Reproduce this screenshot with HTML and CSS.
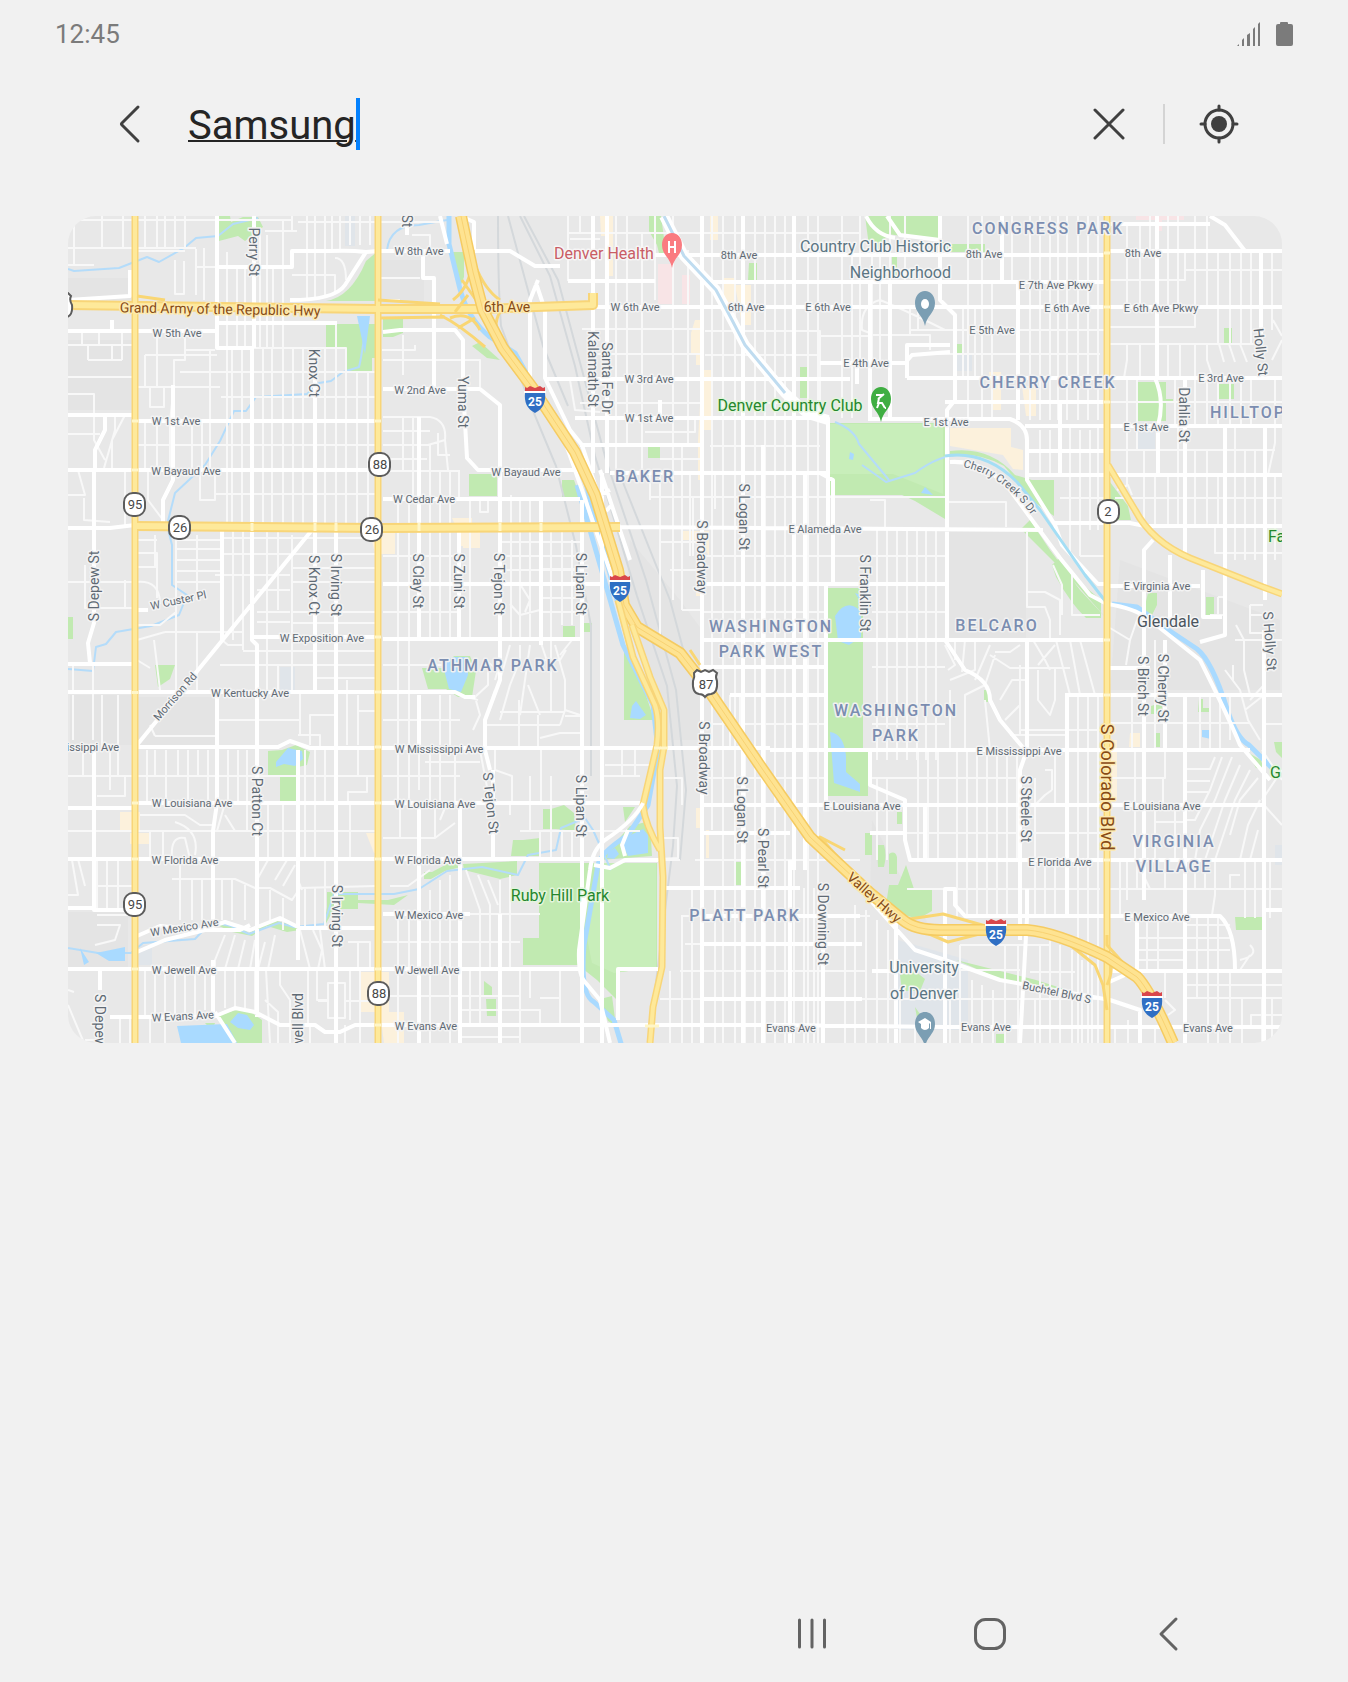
FILE: index.html
```html
<!DOCTYPE html>
<html lang="en">
<head>
<meta charset="utf-8">
<meta name="viewport" content="width=device-width, initial-scale=1">
<title>Map search</title>
<link rel="stylesheet" href="styles.css">
</head>
<body>
<div class="screen">
  <div class="status">
    <time class="clock">12:45</time>
    <svg class="status-icons" width="56" height="24" viewBox="0 0 56 24" aria-hidden="true">
      <path d="M0 24l2-2v2zM5 24v-6l2-2v8zM10 24V13l3-2v13zM16 24V7l2-2v19zM21 24V2l2-2v24zM43 2v-1q0-1 1-1h6q1 0 1 1v1h3q2 0 2 2v18q0 2-2 2H41q-2 0-2-2V4q0-2 2-2z"/>
    </svg>
  </div>
  <form class="search" role="search">
    <button class="icon-btn back" type="button" aria-label="Back">
      <svg width="24" height="40" viewBox="0 0 24 40"><path d="M20 3L4 19q-1 1 0 2l16 16"/></svg>
    </button>
    <div class="field">
      <input class="query" type="text" value="Samsung" aria-label="Search places">
      <span class="caret"></span>
    </div>
    <button class="icon-btn clear" type="button" aria-label="Clear">
      <svg width="32" height="32" viewBox="0 0 32 32"><path d="M2 2l28 28M30 2L2 30"/></svg>
    </button>
    <span class="divider"></span>
    <button class="icon-btn locate" type="button" aria-label="My location">
      <svg width="40" height="40" viewBox="0 0 40 40"><circle cx="20" cy="20" r="14"/><path d="M20 2v4M20 34v4M2 20h4M34 20h4"/><circle class="dot" cx="20" cy="20" r="8"/></svg>
    </button>
  </form>
  <main class="map">
<svg viewBox="68 216 1214 827" role="img" aria-label="Map of Denver">
<defs>
  <symbol id="interstate" viewBox="0 0 22 28"><path fill="#d9474b" d="M1 2l2 1 3-2 5 2 5-2 3 2 2-1v5H1z"/><path fill="#fff" d="M0 6h22v2H0z"/><path fill="#2f6fc4" d="M1 8h20c1 9-2 16-10 20C3 24 0 17 1 8z"/><text class="shield-num light" x="11" y="21">25</text></symbol>
  <symbol id="pin" viewBox="0 0 20 36"><path d="M10 0C4 0 0 5 0 12c0 10 8 12 10 23 2-11 10-13 10-23C20 5 16 0 10 0z"/></symbol>
  <path id="creek-label" d="M963 467Q1006 476 1034 519"/>
</defs>
<path class="land" d="M68 216h1214v827H68z"/>
<path class="block" d="M68 278h65v22H68zM68 340h66v70H68zM380 260h44v45h-44zM946 532h80v107h-80zM630 540l50 60 22 30v110h-36l-12-60-30-60zM872 820l33 65 30 50-65-40zM70 695h64v50H70zM138 697h78v48h-78zM68 912h60v55H68zM1120 560l160 60v70h-170z"/>
<path class="civic" d="M345 216h10v30h-10zM280 667h15v25h-15zM957 355h15v16h-15zM1137 431h18v18h-18zM898 940l70 20v70h-70zM1275 845h7v20h-7zM137 945h15v20h-15z"/>
<path class="medical" d="M658 264h15v40h-15zM682 275h8v29h-8zM1136 216h48v4h-22v11h-6v-11h-20z"/>
<path class="shop" d="M950 428h61v19l12 3v20l-10-1-10-14-53-9zM695 320h8v45h-7v-12h-5v-20zM702 370h9v60h-10v50h-3v-40zM600 216h5v20h-4zM608 216h5v60h-4zM710 216h8v24h-8zM722 278h12v30h-12zM735 285h16v40h-9zM989 372h12v38h-8zM1022 386h14v30h-10zM452 518h20v28h-12v-10zM462 524h18v24h-17zM370 532h25v22h-20zM683 531h26v25l-10-16h-16zM696 556h7v40h-7zM120 812h20v18h-20zM130 833h20v11h-20zM366 833h14v20h-6zM361 972h28v40h-28zM380 1012h24v31h-20zM1130 733h10v14h-11zM1106 740h11v60h-14zM696 808h4v20h-4zM706 830h3v28h-3z"/>
<path class="green" d="M218 216h12l1 6 12-5h15l5 10-18 14-7-5-19 5zM378 251v50h-52q25-4 40-40zM326 324h52v34h-6v13h-26v-24h-20zM383 318h20v15l-10 4h-10zM452 252h12v25l-5 13zM480 342l20 18-13-2-15-12zM649 216h12l5 37-7 0-2-8-8-14zM749 263h8v17h-9zM865 216h16v30h-12zM870 216h72v28h43v8h-38v-10l-60-8-8 20zM892 257h5v22h-5zM957 344h7v10h-7zM800 367h7v31h-7zM1137 382h29v39h-29zM1166 399h7v4h-7zM1217 384h17v15h-17zM1224 328h8v15h-8zM648 447h12v11h-12zM469 474h28v22h-28zM562 480h12l6 17h-18zM827 423h118v96l-30-18-13-6h-75v-25zM950 451q40-5 65 24l17 5h22v36l-20-14-30-36q-24-14-54-11zM1030 520l20 30 30 40 26 28-30-34-55-55zM1059 558l18 22 24 20v18h-15q-15-14-30-41l-4-12zM1110 482l18 24 3 14h-16l-5-10zM1148 593h9v12l-6 12-8-3zM1206 597h8v20h-8zM1154 705h8v9h-11v-8zM1154 733h6v14h-6zM1199 699h4v9h6v4h-11zM827 588h36v162h5v46h-41zM563 626h12v12h-12zM584 623h8v9h-8zM624 650q15 20 30 70h-30zM422 668h22l10-12 16 0 6 15-4 26h-14l-12-8h-18zM68 617h5v22h-5zM155 665h20l-5 14-12 8zM268 751l14-1 14-5 14 7-3 13-9 2v34h-18v-26h-12zM543 809h8l13-4 10 8 2 18-20-2h-13zM513 840h10l17-2v18h-29zM463 864l54-3v14l-17 4-36-9zM424 872h8l15-8 14-3v6l-16 4-14 8h-7zM539 863h118v105l-38 4v30l-22-22-19-15h-55v-27h16zM612 996l4 30-8-5-8-22zM600 860l30-34 20-5 2 35zM623 807h12l-10 15zM734 862h7v23h-7zM865 833h7v22h-7zM877 845h7q3 10 0 22h-6zM889 854q6-4 8 3v17h-8zM889 885h9l8-20 8 24h18v22l-14 8-20-6-12-8zM897 812h5v12h-5zM327 892h31v17h-24l-10 18 3-20zM215 924h18l16 9 20-10 8-2 30 8-20 3-20-6-15 10-20-4zM358 900h30l20-5-14 10-36-2zM217 1015l28-7 17 12v23h-30zM205 1023h10l-3 8zM484 981l8 6v9h-8zM486 999h10v17h-9zM900 975l15-4 10 8-5 12-18 0zM915 1007l5 7-3 4zM996 1034h10v9h-10zM956 960l80 20 44 14-80-15zM1235 917h28v13h-27zM1247 752l14 8 3 10-8-2zM1274 742h8v16l-6-6zM984 690h4v12h-4z"/>
<path class="green light" d="M598 863h58v104l-42 6-22-10-6-30zM827 424h116v70l-50-20h-66z"/>
<path class="rail" d="M498 216q0 70 3 110l30 80 25 60 20 80 15 80v150M520 216l30 60 25 90 20 90 42 140 30 90 10 100-4 60-20 160M524 216l34 64 24 90 24 90 40 120 30 110 10 100-6 70M508 216l35 130 25 60M622 480l48 120 16 60"/>
<path class="stream" d="M68 269l6 2 45-3 28-11 12 5 25-14 12-10 22-2 15-12 25-6M387 250q3-25 32-25l28-5M366 325q-5 35-7 42l-16 5-12 9-12 2-12 11-51 3-10 14h-12l-14 30-15 24-30 28-8 32 5 20v40l15 10-8 20-28 11-35 6-10 12-10 3-3 24-25-2M68 948l30 5 33 0 12-10 52-4 16-17 20 4 18 8 30-11 15 4 30-3 10-30 60 0 25-5 28-18 35-4 36 8 10-20 28-5 5-22 24-10 8 12 18 40M835 422q20 8 24 22l30 36M862 465l24 17 29-9q24-18 45-18"/>
<path class="river" d="M449 216v28l11 45q8 30 30 48l25 16 28 50 38 60 15 60 22 80 12 45M577 485l26 90 20 70 30 60 5 45-10 55-20 30q-28 18-30 30l-14 80q-4 50 10 57l20 18 12 40M1112 604l25 3 30 22 30 20q15 12 30 60 10 30 22 36l25 25"/>
<path class="water" d="M357 316h13l-5 38zM442 662l12-5h14v18l-7 17-12-3zM276 762l12-14 14 3 1 8-8 7-11-2-8 3zM632 706l4-5 10 14-6 4-10-1zM624 838l19-9 5 6v18l-20 3-4-8zM608 852l7-4 4 6-5 5-7-1zM177 1026l50-2 10 19h-56zM230 1022l8-9 9 2 7 10-4 5-12-2zM96 953l29-6v14h-16zM80 948l9 14-5 3zM835 616q10-16 22-8l4 5v24l-12 8-11-4zM830 732q14 2 16 24v16l14 12v8l-14-5-12-4zM855 593l6 2v7zM921 493l4-6 8 8zM850 452l4 2-1 6-4-1zM1202 730l7 0 2 9-9-2z"/>

<path class="minor" d="M68 220H292M68 248H196M137 251H185M102 216V248M123 216V248M145 216V248M157 216V248M165 216V248M175 216V248M185 216V248M74 216V265M94 265H68M196 249V295M204 248V300M175 260V294H184V261M195 267H217M227 252V348M237 268V348M245 268V348M260 235V348M267 235V348M273 268V348M283 220V348M265 231H297M292 216V232M298 222H378M307 216V300M315 216V300M325 216V298M332 216V251M340 216V251M350 216V245M360 216V245M370 216V245M292 275H335V292M335 258Q346 258 346 280
M227 348V525M232 348V525M242 348V525M263 348V525M272 348V525M283 348V525M293 348V525M303 348V525M325 348V525M336 324V525M346 348V525M357 372V525M368 372V525M254 348H346V372M180 372H375M137 387H220M221 397H375M137 445H375M68 345H132M88 360H122M88 345V360M82 330V345M99 330V345M112 345V360M122 330V360M68 377H132M68 394H94V412M68 434H100M94 412V440L105 460M115 415V430L104 468M125 415L112 440V470M145 355V387M157 330V387M164 387V407H150V387M185 330V360H174V386L170 421V470M192 421V470M202 421V470M210 350V470M145 355H217M185 350H215M145 421V470M157 421V470M148 470V500L163 520M78 470L85 495H68M84 498V520L110 522M200 470V500H215V470M215 494H375M125 470V528
M68 582H135M85 565V608H135M125 580V608M73 664V692M93 664V740M102 695V747M118 695V747M73 695V740M155 535V568M176 535V690M197 535V600M233 530V640M243 530V650M267 530V692M278 530V610M292 535V692M347 680V745M358 695V745M176 540H222M176 549H222M176 560H222M176 571H222M176 582H222M137 540H157M137 553H157V598M137 567H157M222 538H378M222 554H290M292 568H375M215 575H290M257 590H290M257 612H290M292 612H375M292 623H375M165 632H243M137 625H160L176 612M137 640L165 632M154 640L160 690M243 651H375M220 665H375M315 678H375M137 582Q160 580 160 604M137 660L150 668M217 720H300M155 736H217M155 736L150 725M310 745V715H335M298 735H320V747M267 665V692M278 665V692M197 632V690M222 640L228 645H243M292 582H375M292 554H375M257 622H290M300 692V735M358 711H375
M68 776H378M97 796H125V776M83 750V776M110 750V790M118 750V776M147 750V803M155 750V776M166 750V803M178 750V776M188 750V803M198 750V776M208 750V803M228 750V803M238 750V803M247 750V831M268 803V859M283 803V859M305 750V859M315 750V859M325 750V803M350 803V859M348 803V792H367V776M358 750V776M68 831H378M140 815H185L200 825H215M175 822Q200 830 195 855M172 859Q170 835 185 838L190 859M150 831V859M163 831V859M225 803L217 831M225 815L235 831M97 859V910M107 859V910M118 859V910M97 886H132M68 895H78L72 860M78 859L85 886M97 915H132M97 925H120L115 940L95 945M172 879H235L255 888H270L292 900L300 888L375 886M180 859V920M192 879V920M202 879V920M222 879V920M232 879V920M245 885V920M258 890V920M270 890V920M283 898V930M305 888V930M315 888V930M325 860V930M258 878L268 860M275 880L287 860M283 886L295 865M302 890L298 880
M225 935L215 960V969M235 935L225 969M245 940L238 969M255 940L250 969M265 942L258 969M275 935L268 969M300 930L310 969M320 930L325 969M313 930L322 950L318 969M145 970V1017M155 970V1017M165 970V1017M175 970V1017M185 970V1017M195 970V1017M205 970V1010M225 970V1008M235 970V1008M245 970V1008M255 970V1012M266 970L270 1043M280 970V985L290 1000V1043M308 970V1025M317 970V1000H328V983H345V1018H328V1000M318 1001H328M345 1001H375M350 970V1020M360 970V1025M68 990L74 992M68 1005L84 1043M85 1040H100M137 1043V1017M120 1017V1043M130 1017V1043M150 1017V1043M165 1017V1043M265 1000L278 1012V1043M310 1043V1025M345 1025V1043M360 1043V1025M348 942H370V969M358 942V969
M380 222H440M412 235H430V251M380 278H420M378 300H400M383 360H440M403 335V375M382 350H415V345M383 417H430Q447 420 445 440L428 445H383M445 440L448 470M383 431H430M438 433V455L450 455M383 459H427M403 417V470M413 417V499M430 445V499M440 470V525M450 470V525M459 471V499M383 471H460M440 360H480V387M398 500V640M409 500V640M430 499V640M440 530V640M450 530V640M470 500V640M480 497V512H488V497M511 495V640M520 499V640M530 499V640M551 530V640M562 530V625M572 540V625M383 556H460M383 612H460M383 665H445M383 720H460M500 556H580M500 570H580M500 542H580M541 612H580M541 569H580M541 598H580M520 584L530 600L525 612M510 604L520 615L540 610M398 640V745M409 640V745M440 695V745M450 695V745M475 697L480 715L473 730M475 697L488 685V668M485 660L498 670L495 680M495 690L485 720M510 645L500 680M520 645V660L510 685L500 720M530 645L525 680L520 715M528 685L540 715M540 640L550 670M555 645L565 680V710L560 725M572 640L560 655M540 660H560L566 650M500 712H565M485 725H560M540 738L560 733H580M565 710L580 715M461 695L478 700M519 700V747M538 715V747M551 640V712
M383 776H460M398 750V803M409 750V803M419 750V790M430 750V803M440 750V803M455 750V803M383 838H435L455 823M400 803V838M419 803V838M435 803V838M447 803L440 820M425 762H480M480 750L490 803M495 750V770L512 776V803M530 776V831M541 750V803M551 776V831M520 831H640M510 803V815M540 831V859M551 831V859M562 831V859M572 831V859M600 776H640M605 765H650M622 750V776M635 750V776M565 716H582M466 870L480 910V969M478 875L490 905V969M488 880L498 905M500 880V969M510 875V969M470 914H540M383 942H520M383 996H520M390 886L408 886L430 870M430 890V969M440 880V969M450 875V969M420 872V859M398 914V969M409 914V969M398 969V1043M430 969V1043M450 969V1043M470 969V1025M480 969V1025M520 969V1043M540 998H560V969M560 998V1025M460 1010H540V1025M500 969V996M530 969V998M460 1037H520
M568 216V281M568 233H860M570 239H600M580 216V233M593 239V216M616 216V470M627 216V445M642 233V445M655 216V300M673 216V600M688 250V445M712 216V830M723 216V1043M735 216V1043M755 216V1043M765 216V1043M775 216V1043M785 216V1043M808 216V1043M818 216V1043M842 216V418M852 250V418M860 216V360M872 250V360M582 329H700M705 331H820V418M820 336H870M590 354H700M705 355H820M580 403H700M720 403H820M600 412L575 410L570 380M645 432H695V418M710 446H820M660 459H700M620 445H600M642 445V470M650 497H700M650 500V473M660 473V640M682 445V610M690 556V473M693 497V556M703 497H945M715 509V473M661 542H700M670 570H700M703 556H945M682 610H702M703 612H826M703 667H826M740 695V750M703 724H826M730 695V750M703 778H826M700 805H770M703 833H790M695 860H860M680 860H640M640 860L678 858V838H660M682 805V778H664M682 916H870M685 944H700M680 971H866M682 915V1043M692 888V1043M715 888V1043M745 750V1043M794 870V1043M804 888V1043M814 888V1043M845 916V1043M855 905V1043M866 910V1043M877 920V1043M888 930V1043M660 999H945M670 971V1043
M880 300Q860 305 862 330L875 335M880 300Q905 310 945 330M910 335L930 335V350M910 330H945M908 345V378M870 335H910V307M918 307V330M905 216V282M890 216V363M880 250V363M968 216V420M982 216V420M992 280V420M1012 216V280M1030 216V420M1040 216V420M1050 216V420M1058 216V420M1067 216V420M1078 216V420M1088 216V420M1098 216V420M940 330H1105M925 354H1100M975 307V378M963 307V378M1140 224V307M1127 224V310M1150 216V251M1168 216V310M1178 216V307M1195 216V307M1207 216V307M1218 251V344M1230 251V344M1241 251V344M1251 251V344M1272 251V330M1185 270H1282M1107 280H1185V251M1107 327H1195V309M1107 344H1260M1127 344V360L1124 378M1140 344V378M1168 344V378M1180 344V378M1195 344V378M1207 344V360L1213 378M1219 344L1224 362M1229 344L1235 362M1240 344L1247 362M1107 402H1282M1107 450H1275M1127 378V451M1137 378V451M1175 378V426M1195 378V426M1207 378V426M1218 378V426M1230 378V426M1241 378V426M1251 378V426M1275 378V443L1268 475M1282 340L1272 360M1273 320L1282 336M1040 430V475M1050 430V475M1070 426V530M1080 430V530M1090 430V530M1098 426V530M1127 451V485M1144 451V526M1155 475V526M1168 475V526M1178 426V526M1195 451V526M1207 451V526M1218 475V526M1235 426V560M1245 451V560M1255 451V560M1275 475V560M1060 498H1105M1115 498H1282M1215 526V553H1282M1080 556H1105M1117 490L1128 485L1132 495
M877 529V760M887 529V760M897 529V760M907 529V760M917 529V760M926 529V760M936 529V760M872 556H945M872 612H945M872 667H945M872 724H945M949 502H1006V527M870 500H885V529M1080 530V556M1070 530V556M1028 592H1045L1060 600V635M1027 532V607H1045L1050 620V640M1072 575V615H1100M1053 565L1062 585V615M945 645L955 665L948 670M955 640V660M965 640L962 672M975 640V670L950 680M990 645L975 680M995 652H1010L1020 645M990 655L1010 668H1030M1000 700L1012 680H1025M1020 665V735M1005 720L1020 705M1033 640L1045 660L1050 670M1038 665L1055 645M1038 670V700L1050 715L1055 700V668M1056 640L1070 695M1070 640L1080 695M1080 640L1095 695M1030 668H1070M995 655L985 685L965 695V750M950 690V750M985 700L990 750M1010 735H1065M1020 730H1105M1078 695V1043M1088 695V1043M1098 695V1043M1110 628L1130 640L1126 665M1130 640L1137 620M1250 605H1263M1250 605V633H1262M1262 615H1250M1235 640H1282M1236 625L1244 640V670L1250 695M1225 670L1240 690L1248 720L1260 740M1233 665V680M1250 700L1264 685M1245 710L1264 695M1210 615H1225M1218 597V617M1218 597H1225M1110 723H1250M1132 695V750M1155 640V750M1200 695V750M1210 695V750M1220 695V750M1230 695V740M1262 724H1282M1282 780L1262 750M1262 800L1282 770M1264 805L1282 825M1186 769H1210L1215 757M1187 781H1210M1187 792H1208M1187 820H1195L1210 790L1222 757M1195 860L1200 830L1215 800L1232 757M1205 860L1215 830L1225 800L1240 765M1215 860L1225 830L1235 800L1250 770M1230 835L1240 800L1258 778M1240 860L1248 825L1260 800M1250 860L1258 830
M870 778H1027M877 778V860M887 778V860M905 833H1100M918 750V860M928 750V860M938 750V860M957 750V860M967 750V860M977 750V860M987 750V860M997 750V860M1007 750V860M1017 750V860M1035 778V860M1052 790V770H1045M1035 805L1045 795L1052 790M1055 750V805M1110 778H1165V750M1135 750V860M1145 820V860M1155 805V860M1175 805V860M1155 822H1185M1163 778V805M907 889H1100M957 860V918M967 860V918M977 860V918M987 860V918M997 860V918M1007 860V918M1035 860V918M1045 860V918M1055 860V918M1110 889H1282M1120 862V918M1127 862V900M1137 862V889M1165 862V889M1195 862V889M1205 862V889M1212 915L1215 895V862M1230 889V875H1240M1245 862V918M1255 862V918M1270 862V918M1137 862L1150 889M1137 918V970M1147 918V970M1158 918V970M1137 938H1183M1137 950H1183M1137 960H1183M1187 925H1230M1187 938H1230M1187 950H1230M1197 918V970M1208 918V970M1218 918V970M1240 960Q1260 955 1250 945M1240 970L1250 955M1185 998H1282M1185 985H1282M1165 970V998M1197 970V998M1208 970V1043M1218 970V1043M1230 970V1043M1242 998V1043M1262 998V1043M1272 998V1043M1251 1025V1015H1282M1165 1000L1175 1010L1168 1015M950 1043V999M960 945V1043M972 980V1043M982 985V1043M993 990V1043M1005 945V1043M1018 945V1043M1030 972H1075M1040 945V1043M1050 940V1043M1060 945V1043M1072 950V1043M1082 960V1043M1092 965V1043M960 945H1050M960 970H1020M870 999H945M900 999V1043M915 1027V1043M1035 1000V1043M945 999H1100M1115 1027V1043M1128 1020V1043M1155 1027V1043"/>
<path class="major" d="M217 216V348H254M254 216V348M252 348V640L257 645V1017M217 267H292V251H330Q350 250 366 252L378 251H450M68 300L130 296V270M216 323H337M68 331H113V331H215M290 300Q335 300 345 285L366 252M68 415H135M137 421H375M68 470H378M94 470V623L88 643L90 663M112 320V331M68 528H110L135 525M105 415V430L95 450V470M173 385V421V480L163 500V525M315 348V690M336 530V1043M222 530V640M252 637H378M68 664H135M68 692H455L465 697H475M312 530L137 745M137 610H148M137 747H278L290 741L310 748H770M94 750V910H135M68 808H132M137 803H643M68 859H600M217 692V803L213 831V920M213 960V1012M68 908H94M137 936L160 926L200 930L225 922L250 930L280 918L300 928H375M137 952L165 940L205 930H240L250 925M298 750V960M68 969H582M100 969V990M110 1017H213L235 1008L255 1012L280 1025H315L325 1032H340L355 1025H780L945 1027H1282M215 1012L235 1043M213 1012V969
M407 216V235M423 251V278H434V387M383 332L400 330H455L463 340V387L467 458L478 470H580M383 389H480L500 405V470M440 216L447 244M460 216L474 222V251H510L535 266H560M538 280L530 300V378M536 283L545 310V378L570 430L582 445M419 417V640M419 695V745M459 530V640M500 470V680L485 720L485 750L490 770M541 497V645M582 500V1043M602 473V1043M383 499H580M383 584H600M383 639H580M493 770V803M493 831V859M419 803V1043M460 803V1043M383 914H470M383 803H400M500 914V1043M593 216V473M607 216V473M568 281H655M655 255H1107M705 282H1107M595 307H1282M702 216V1043M743 216V1043M763 445V1043M794 216V870M805 473V870M545 379H850M850 363H905L912 355L950 352M820 363H850M575 418H828V473M580 445H700M610 473H820L833 480V584M582 445L600 500M560 427L582 490L620 600M600 470L630 560M600 495L610 490M606 511L612 505M620 527L1043 530M700 584H945M703 640H1105M703 667H826M730 695H826V584M660 400V418M828 418V529M857 384V360M828 473H610M770 750H1250M870 283V421M890 282V421M702 805H1075M665 888H800M703 944H862M703 916H860M703 999H862M703 833H790M790 860V1043M823 900V1043M826 610V805
M866 216Q875 235 895 238M887 216L900 235L940 240M940 216V300L955 315V400L947 410V640M1002 216V282M1018 282V420M907 378V345H950M907 378H1282M945 402H1105M870 419H1010Q1027 425 1027 440V480L1055 525L1062 545L1098 584H1107M950 462Q985 460 1010 490L1060 558L1090 595L1107 604Q1135 608 1150 620L1200 660Q1230 720 1240 745L1270 780M1025 426H1282M1028 451H1105M1028 475H1282M1060 402V475M1055 523L1130 523L1145 526H1282M1110 224H1210M1210 216L1225 225L1245 251M1107 251H1282M1157 216V378M1155 378Q1165 400 1158 426V475M1261 250V340M1185 380V555M1225 426V635L1200 642M1265 426V600M1110 586H1200M1144 560V550L1153 540M1144 560V900M1170 555V620M1165 640V750M1203 570V617H1222M1110 668H1150M1065 695H1282M1185 695V1043M1067 695V918M1027 640V750L1020 770V940M945 640L965 670Q990 680 990 700L1000 720L1025 750M1264 630V1043M870 750V785L905 800V840L910 860H1282M905 805H1264M870 833H905M1027 889V918L1020 1043M945 1043V889H955V905L965 916H1220Q1235 930 1235 970M1137 970V920M1107 971H1282M870 900L915 950L945 960L1000 980L1110 1000L1140 1010V1043M872 971H900M896 920V1043M1107 983L1125 975M1110 805H1264M925 805V860M1264 910H1282"/>
<path class="speer" d="M664 216L684 256L716 290L732 320L745 345L785 393L808 414L828 420"/>
<path class="speer-creek" d="M664 216L684 256L716 290L732 320L745 345L785 393"/>
<path class="creek" d="M945 456Q985 450 1017 482L1040 510L1085 575L1106 602"/>

<path class="highway-edge" d="M135 216V1043M378 216V1043M1107 216V1043M1108 465L1135 510Q1152 542 1190 558L1263 587L1282 594"/>
<path class="highway-edge wide" d="M68 305L378 309L480 309L593 305V293M135 526L378 528L620 527"/>
<path class="highway-fill" d="M135 216V1043M378 216V1043M1107 216V1043M1108 465L1135 510Q1152 542 1190 558L1263 587L1282 594"/>
<path class="highway-fill wide" d="M68 305L378 309L480 309L593 305V293M135 526L378 528L620 527"/>
<path class="ramp" d="M453 300Q473 285 473 250M462 280L490 320M500 300Q485 290 475 265M440 315Q460 325 485 347M500 345Q492 325 500 312M450 318Q470 310 480 330M468 295L455 312M458 328L475 318M378 300L440 304M137 296L165 300M380 318L445 317M903 920L943 914L1000 930M920 930L948 942L995 930M1107 935V945L1125 965M1070 945L1095 965L1103 985L1107 1010M1107 985Q1118 960 1100 955M862 885L820 837L845 850M700 665L690 650"/>
<path class="fwy-edge" d="M461 216L473 272L483 310L503 348L532 387L575 452L595 495L618 570L624 605L637 627L680 653L705 685L763 770L810 837L870 893L903 920Q915 930 940 930H1027Q1055 932 1107 957L1137 977Q1150 990 1173 1043"/>
<path class="fwy-fill" d="M461 216L473 272L483 310L503 348L532 387L575 452L595 495L618 570L624 605L637 627L680 653L705 685L763 770L810 837L870 893L903 920Q915 930 940 930H1027Q1055 932 1107 957L1137 977Q1150 990 1173 1043"/>
<path class="fwy-line" d="M461 216L473 272L483 310L503 348L532 387L575 452L595 495L618 570L624 605L637 627L680 653L705 685L763 770L810 837L870 893L903 920Q915 930 940 930H1027Q1055 932 1107 957L1137 977Q1150 990 1173 1043"/>
<path class="highway-edge" d="M618 600L633 657L655 705Q660 720 657 745L643 805Q645 825 660 850M632 625L650 677L664 710V747L660 770V827L663 877L662 967L653 1007L650 1043"/>
<path class="highway-fill" d="M618 600L633 657L655 705Q660 720 657 745L643 805Q645 825 660 850M632 625L650 677L664 710V747L660 770V827L663 877L662 967L653 1007L650 1043"/>
<path class="major" d="M643 803Q635 820 605 840Q592 850 590 870L579 950Q578 975 585 982L600 1000L610 1043M594 865L610 868L625 860H658M625 856L622 845L628 830M618 1020V969H658"/>
<path class="cross" d="M132 692.5h6M132 470h6M132 421h6M132 803h6M132 859h6M132 969h6M375 421h6M375 637h6M375 692h6M375 747h6M375 803h6M375 859h6M375 969h6M375 1025h6M1104 253h6M1104 307h6M1104 402h6M1104 640h6M1104 695h6M1104 751h6M1104 805h6M1104 860h6M252 523v8M315 523v8M336 523v8M419 523v8M500 523v8M541 523v8M654 748h14M645 1026h14"/>

<g class="road">
<text x="419" y="255">W 8th Ave</text><text x="177" y="337">W 5th Ave</text><text x="176" y="425">W 1st Ave</text><text x="186" y="475">W Bayaud Ave</text><text x="420" y="394">W 2nd Ave</text><text x="739" y="259">8th Ave</text><text x="635" y="311">W 6th Ave</text><text x="746" y="311">6th Ave</text><text x="828" y="311">E 6th Ave</text><text x="866" y="367">E 4th Ave</text><text x="649" y="383">W 3rd Ave</text><text x="649" y="422">W 1st Ave</text><text x="526" y="476">W Bayaud Ave</text><text x="984" y="258">8th Ave</text><text x="1143" y="257">8th Ave</text><text x="1056" y="289">E 7th Ave Pkwy</text><text x="1067" y="312">E 6th Ave</text><text x="1161" y="312">E 6th Ave Pkwy</text><text x="992" y="334">E 5th Ave</text><text x="1221" y="382">E 3rd Ave</text><text x="946" y="426">E 1st Ave</text><text x="1146" y="431">E 1st Ave</text><text x="424" y="503">W Cedar Ave</text><text transform="rotate(-12 179 604)" x="179" y="604">W Custer Pl</text><text x="322" y="642">W Exposition Ave</text><text x="250" y="697">W Kentucky Ave</text><text class="to-end" x="119" y="751">issippi Ave</text><text x="439" y="753">W Mississippi Ave</text><text x="825" y="533">E Alameda Ave</text><text x="1157" y="590">E Virginia Ave</text><text x="1019" y="755">E Mississippi Ave</text><text x="192" y="807">W Louisiana Ave</text><text x="435" y="808">W Louisiana Ave</text><text x="185" y="864">W Florida Ave</text><text x="428" y="864">W Florida Ave</text><text transform="rotate(-9 185 931)" x="185" y="931">W Mexico Ave</text><text x="429" y="919">W Mexico Ave</text><text x="184" y="974">W Jewell Ave</text><text x="427" y="974">W Jewell Ave</text><text transform="rotate(-3 183 1020)" x="183" y="1020">W Evans Ave</text><text x="426" y="1030">W Evans Ave</text><text x="862" y="810">E Louisiana Ave</text><text x="1162" y="810">E Louisiana Ave</text><text x="1060" y="866">E Florida Ave</text><text x="1157" y="921">E Mexico Ave</text><text x="791" y="1032">Evans Ave</text><text x="986" y="1031">Evans Ave</text><text x="1208" y="1032">Evans Ave</text><text transform="rotate(12 1056 996)" x="1056" y="996">Buchtel Blvd S</text><text transform="rotate(-49 178 699)" x="178" y="699">Morrison Rd</text><text class="to-start"><textPath href="#creek-label">Cherry Creek S Dr</textPath></text>
</g>
<g class="road upright">
<text transform="translate(254 252) rotate(90)">Perry St</text><text transform="translate(407 221) rotate(90)">St</text><text transform="translate(314 373) rotate(90)">Knox Ct</text><text transform="translate(463 402) rotate(90)">Yuma St</text><text transform="translate(593 369) rotate(90)">Kalamath St</text><text transform="translate(607 378) rotate(90)">Santa Fe Dr</text><text transform="translate(744 517) rotate(90)">S Logan St</text><text transform="translate(1261 352) rotate(84)">Holly St</text><text transform="translate(1184 415) rotate(90)">Dahlia St</text><text transform="translate(94 586) rotate(-90)">S Depew St</text><text transform="translate(314 585) rotate(90)">S Knox Ct</text><text transform="translate(336 585) rotate(90)">S Irving St</text><text transform="translate(418 581) rotate(90)">S Clay St</text><text transform="translate(459 581) rotate(90)">S Zuni St</text><text transform="translate(499 584) rotate(90)">S Tejon St</text><text transform="translate(581 584) rotate(90)">S Lipan St</text><text transform="translate(702 557) rotate(90)">S Broadway</text><text transform="translate(865 593) rotate(90)">S Franklin St</text><text transform="translate(1143 686) rotate(90)">S Birch St</text><text transform="translate(1163 688) rotate(90)">S Cherry St</text><text transform="translate(1270 641) rotate(86)">S Holly St</text><text transform="translate(257 801) rotate(90)">S Patton Ct</text><text transform="translate(337 916) rotate(90)">S Irving St</text><text class="to-start" transform="translate(100 994) rotate(90)">S Depew</text><text class="to-end" transform="translate(298 993) rotate(-90)">well Blvd</text><text transform="translate(491 803) rotate(84)">S Tejon St</text><text transform="translate(581 806) rotate(90)">S Lipan St</text><text transform="translate(704 758) rotate(90)">S Broadway</text><text transform="translate(742 810) rotate(90)">S Logan St</text><text transform="translate(763 858) rotate(90)">S Pearl St</text><text transform="translate(823 924) rotate(90)">S Downing St</text><text transform="translate(1026 809) rotate(90)">S Steele St</text>
</g>
<g class="route">
<text transform="rotate(1 220 314)" x="220" y="314">Grand Army of the Republic Hwy</text><text x="507" y="312">6th Ave</text><text transform="rotate(42 871 901)" x="871" y="901">Valley Hwy</text><text class="colorado" transform="translate(1107 787) rotate(90)">S Colorado Blvd</text>
</g>
<g class="district">
<text x="1048" y="234">CONGRESS PARK</text><text x="1048" y="388">CHERRY CREEK</text><text class="to-start" x="1210" y="418">HILLTOP</text><text x="645" y="482">BAKER</text><text x="771" y="632">WASHINGTON</text><text x="771" y="657">PARK WEST</text><text x="896" y="716">WASHINGTON</text><text x="896" y="741">PARK</text><text x="997" y="631">BELCARO</text><text x="493" y="671">ATHMAR PARK</text><text x="745" y="921">PLATT PARK</text><text x="1174" y="847">VIRGINIA</text><text x="1174" y="872">VILLAGE</text>
</g>
<g class="place">
<text class="health" x="604" y="259">Denver Health</text><text class="poi to-end" x="951" y="252">Country Club Historic</text><text class="poi to-end" x="951" y="278">Neighborhood</text><text class="park" x="790" y="411">Denver Country Club</text><text class="park" x="560" y="901">Ruby Hill Park</text><text class="poi" x="924" y="973">University</text><text class="poi" x="924" y="999">of Denver</text><text class="town" x="1168" y="627">Glendale</text><text class="park to-start" x="1268" y="542">Fa</text><text class="park to-start" x="1270" y="778">G</text>
</g>
<use href="#pin" x="662" y="233" width="20" height="36" fill="#fa7b80"/>
<path class="glyph" d="M669 241v12M675 241v12M669 247h6"/>
<use href="#pin" x="915" y="291" width="20" height="36" fill="#7b9eb3"/><ellipse cx="925" cy="304" rx="4" ry="5" fill="#fff"/>
<use href="#pin" x="871" y="387" width="20" height="36" fill="#3fae42"/>
<path class="glyph" d="M876 395h7M884 394l-6 5M879 398l-1 5h4l3 5M879 403l-2 5M885 408h1"/>
<use href="#pin" x="915" y="1012" width="20" height="36" fill="#7b9eb3"/><path fill="#fff" d="M925 1018l6 4v7h-1v-6l-1 1v4q-4 4-8 0v-4l-3-2z"/>
<g class="state">
<rect x="124" y="493" width="21" height="23" rx="9"/><text x="135" y="509">95</text><rect x="124" y="893" width="21" height="23" rx="9"/><text x="135" y="909">95</text><rect x="169" y="516" width="21" height="23" rx="9"/><text x="180" y="532">26</text><rect x="361" y="518" width="21" height="23" rx="9"/><text x="372" y="534">26</text><rect x="369" y="453" width="21" height="23" rx="9"/><text x="380" y="469">88</text><rect x="368" y="982" width="21" height="23" rx="9"/><text x="379" y="998">88</text><rect x="1098" y="500" width="21" height="23" rx="9"/><text x="1108" y="516">2</text>
<path d="M694 673l3-3 4 2 4-2 4 2 4-2 4 3q-2 4 0 8 1 12-6 13-4 0-6 3-2-3-6-3-7-1-6-13 2-4 1-8z"/><text x="706" y="689">87</text><path d="M60 294l8-1 3 3q-2 4 1 9 1 10-5 12l-6 2z"/>
</g>
<use href="#interstate" x="524" y="385" width="22" height="28"/><use href="#interstate" x="609" y="574" width="22" height="28"/><use href="#interstate" x="985" y="918" width="22" height="28"/><use href="#interstate" x="1141" y="990" width="22" height="28"/>
</svg>
  </main>
  <nav class="navbar" aria-label="System">
    <button class="icon-btn" type="button" aria-label="Recent apps"><svg width="32" height="36" viewBox="0 0 32 36"><path d="M3.500 4v27M16 4v27M28.500 4v27"/></svg></button>
    <button class="icon-btn" type="button" aria-label="Home"><svg width="36" height="36" viewBox="0 0 36 36"><rect x="3.500" y="3.500" width="29" height="29" rx="10"/></svg></button>
    <button class="icon-btn" type="button" aria-label="Back"><svg width="24" height="36" viewBox="0 0 24 36"><path d="M20 3L5 18l15 15"/></svg></button>
  </nav>
</div>
</body>
</html>
```
FILE: styles.css
```css
* { box-sizing: border-box; }
body {
  margin: 0;
  background: #f1f1f1;
  font-family: Roboto, "Liberation Sans", sans-serif;
  color: #252525;
}
.screen {
  min-height: 100vh;
  display: flex;
  flex-direction: column;
}
.status {
  height: 68px;
  padding: 0 55px;
  display: flex;
  align-items: center;
  justify-content: space-between;
}
.clock { font-size: 26px; line-height: 32px; color: #7b7b7b; }
.status-icons { fill: #7b7b7b; }
.search {
  height: 112px;
  margin: 0 107px 0 108px;
  display: flex;
  align-items: center;
}
.icon-btn {
  padding: 0;
  border: 0;
  background: none;
  display: flex;
  align-items: center;
  justify-content: center;
  width: 44px;
  height: 48px;
  flex: none;
}
.icon-btn svg {
  fill: none;
  stroke: #404040;
  stroke-width: 3;
  stroke-linecap: round;
  stroke-linejoin: round;
}
.icon-btn .dot { fill: #404040; stroke: none; }
.field {
  flex: 1;
  margin-left: 36px;
  display: flex;
  align-items: center;
}
.query {
  width: 168px;
  height: 52px;
  padding: 2px 0 0;
  border: 0;
  outline: 0;
  background: none;
  font: 40px/50px Roboto, "Liberation Sans", sans-serif;
  color: #252525;
  text-decoration: underline;
  text-decoration-thickness: 2px;
}
.caret { width: 4px; height: 52px; background: #0381fe; }
.divider {
  width: 2px;
  height: 40px;
  margin: 0 32px;
  background: #d4d4d4;
}
.map {
  margin: 36px 66px 0 68px;
  border-radius: 28px;
  overflow: hidden;
}
.map svg { display: block; width: 100%; height: auto; }

/* map layers */
.land { fill: #e8e8e8; }
.block { fill: #e4e4e4; }
.civic { fill: #e0e5ea; }
.medical { fill: #f8e4e6; }
.shop { fill: #fcf1dc; }
.green { fill: #c1eab1; }
.green.light { fill: #c8eeba; }
.water { fill: #a9daff; }
.rail, .stream, .river, .creek, .speer, .speer-creek, .minor, .major, .ramp,
.fwy-edge, .fwy-fill, .fwy-line, .highway-edge, .highway-fill, .cross {
  fill: none;
  stroke-linejoin: round;
}
.rail { stroke: #d4d8db; stroke-width: 2; }
.stream { stroke: #b4dcfa; stroke-width: 2; }
.river { stroke: #a9daff; stroke-width: 5; }
.creek { stroke: #a4def5; stroke-width: 3; }
.speer { stroke: #fff; stroke-width: 10; }
.speer-creek { stroke: #bfdcf0; stroke-width: 3; }
.minor { stroke: #f8f8f8; stroke-width: 2; }
.major { stroke: #fff; stroke-width: 4; }
.highway-edge { stroke: #f8d578; stroke-width: 7; }
.highway-edge.wide { stroke-width: 10; }
.highway-fill { stroke: #fee99a; stroke-width: 4; }
.highway-fill.wide { stroke-width: 6; }
.ramp { stroke: #f9d673; stroke-width: 3; }
.fwy-edge { stroke: #f5cb62; stroke-width: 12; }
.fwy-fill { stroke: #fee391; stroke-width: 9; }
.fwy-line { stroke: #f8d273; stroke-width: 1; }
.cross { stroke: #fff6c8; stroke-width: 3; }

/* map labels */
.map text {
  text-anchor: middle;
  paint-order: stroke;
  stroke-linejoin: round;
}
.map .to-end { text-anchor: end; }
.map .to-start { text-anchor: start; }
.road { font-size: 11px; fill: #5f6a74; stroke: #f3f3f3; stroke-width: 3px; }
.upright { font-size: 14px; dominant-baseline: central; }
.route { font-size: 14px; fill: #874b15; stroke: #fdeab0; stroke-width: 3px; }
.colorado { font-size: 18px; dominant-baseline: central; }
.district {
  font-size: 16px;
  font-weight: 500;
  letter-spacing: 2px;
  fill: #7b8db0;
  stroke: #f1f1f1;
  stroke-width: 3px;
}
.place { font-size: 16px; stroke: #f6f6f6; stroke-width: 3px; }
.health { fill: #c95d65; }
.poi { fill: #5b7583; }
.park { fill: #25872d; stroke: #e4f5dd; }
.town { fill: #4b555e; }
.glyph { fill: none; stroke: #fff; stroke-width: 2; }
.state rect, .state path { fill: #fff; stroke: #5c5c5c; stroke-width: 2; }
.state text { font-size: 13px; fill: #484848; }
.shield-num { font-size: 12px; font-weight: 700; fill: #fff; }

.navbar {
  height: 96px;
  margin-top: auto;
  padding: 0 158px;
  display: flex;
  align-items: center;
  justify-content: flex-end;
  gap: 134px;
}
.navbar .icon-btn svg { stroke: #636363; }
```
